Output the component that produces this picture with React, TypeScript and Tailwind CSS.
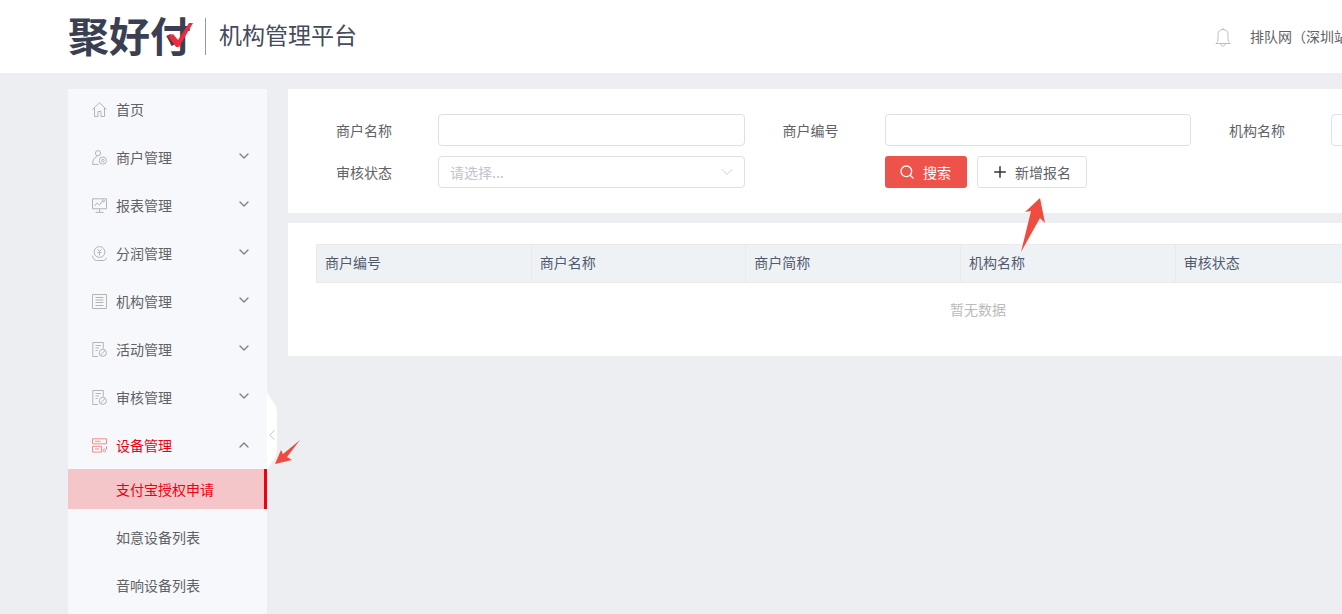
import { ChevronDown, ChevronLeft, ChevronUp, Plus, Search } from "lucide-react";
import type { ReactNode } from "react";

const font = { fontFamily: '"Noto Sans CJK SC", "Liberation Sans", sans-serif' };

const HomeIcon = () => (
  <svg viewBox="0 0 15 15" className="h-[15px] w-[15px]" fill="none" stroke="currentColor" strokeWidth="1">
    <path d="M.5 7.5L7.5.8l7 6.7M2.5 6v8.5h3.5V9.5h3v5h3.5V6" />
  </svg>
);
const Merchant = () => (
  <svg viewBox="0 0 15 15" className="h-[15px] w-[15px]" fill="none" stroke="currentColor" strokeWidth="1">
    <circle cx="6" cy="3.2" r="2.6" />
    <path d="M5 6.6C2 7.4.6 10 .6 14.4h6" />
    <circle cx="10.8" cy="10.6" r="3.6" />
    <circle cx="10.8" cy="10.6" r="1.3" />
  </svg>
);
const Report = () => (
  <svg viewBox="0 0 15 15" className="h-[15px] w-[15px]" fill="none" stroke="currentColor" strokeWidth="1">
    <path d="M.5.8h14v10H.5zM7.5 10.8v3.6M3.5 14.4h8" />
    <path d="M2.5 8l2.5-3 2.5 2 3-4" />
    <circle cx="11.5" cy="3" r="1" />
  </svg>
);
const Profit = () => (
  <svg viewBox="0 0 15 15" className="h-[15px] w-[15px]" fill="none" stroke="currentColor" strokeWidth="1">
    <circle cx="7.5" cy="6" r="5.4" />
    <path d="M5.5 3.2l2 2.3 2-2.3M7.5 5.5v4M5.5 6.5h4" />
    <path d="M.6 9.5c0 3.4 2 5 4 5h6.5c1.8 0 3-.9 3.4-2.6" />
  </svg>
);
const Org = () => (
  <svg viewBox="0 0 15 15" className="h-[15px] w-[15px]" fill="none" stroke="currentColor" strokeWidth="1">
    <path d="M.5.5h14v14H.5zM3.5 3.5h8M3.5 6h8M3.5 8.5h8M3.5 11.5h8" />
  </svg>
);
const Audit = () => (
  <svg viewBox="0 0 15 15" className="h-[15px] w-[15px]" fill="none" stroke="currentColor" strokeWidth="1">
    <path d="M6 14.5H.8V.5h10.5v6" />
    <path d="M3.5 3.5h5.5M3.5 6h3.5M3.5 8.5h2" />
    <circle cx="10.8" cy="10.8" r="3.6" />
    <path d="M8.3 13.3l5-5" />
  </svg>
);
const Device = () => (
  <svg viewBox="0 0 15 15" className="h-[15px] w-[15px]" fill="none" stroke="currentColor" strokeWidth="1">
    <path d="M.5.8h14v5H.5zM.5 8.3h9v5.800H.5zM14.500 8.300v3" />
    <path d="M3 3.300h5.500M3 11h4" />
    <circle cx="12.300" cy="12.400" r="1.400" />
  </svg>
);
const BellIcon = () => (
  <svg viewBox="0 0 16 20" className="h-[20px] w-[16px] text-[#bdbdbd]" fill="none" stroke="currentColor" strokeWidth="1">
    <path d="M1 16.500h14c-1.500-1.500-2-2.500-2-5V7.500C13 4.500 11 2.500 8 2.500S3 4.500 3 7.500v4c0 2.500-.5 3.500-2 5Z" />
    <path d="M8 2.500V.8M5.800 16.800c0 3 4.400 3 4.400 0" />
  </svg>
);

type NavItem = { label: string; icon: ReactNode; arrow?: boolean; open?: boolean };

const navItems: NavItem[] = [
  { label: "首页", icon: <HomeIcon /> },
  { label: "商户管理", icon: <Merchant />, arrow: true },
  { label: "报表管理", icon: <Report />, arrow: true },
  { label: "分润管理", icon: <Profit />, arrow: true },
  { label: "机构管理", icon: <Org />, arrow: true },
  { label: "活动管理", icon: <Audit />, arrow: true },
  { label: "审核管理", icon: <Audit />, arrow: true },
  { label: "设备管理", icon: <Device />, arrow: true, open: true },
];

const columns = ["商户编号", "商户名称", "商户简称", "机构名称", "审核状态", ""];

const Field = ({ label, children }: { label: string; children?: ReactNode }) => (
  <div className="flex h-8 shrink-0 items-center">
    <span className="w-[102px] pr-[46px] text-right text-[14px] text-[#606266]">{label}</span>
    {children ?? <input className="h-8 w-[306.5px] rounded border border-[#dcdfe6] bg-white" />}
  </div>
);

export default function App() {
  return (
    <div style={font} className="relative h-[614px] w-[1342px] overflow-hidden bg-[#edeef2]">
      <header className="flex h-[73px] items-center bg-white pl-[68px]">
        <div className="relative mb-[5px] flex w-[124px] items-center">
          <span className="text-[41px] leading-none font-bold text-[#3b3f52]">聚好付</span>
          <svg viewBox="0 0 26 26" className="absolute top-[8px] left-[99px] h-[26px] w-[26px]">
            <path d="M1 14l5-2 5 6L22 1h4L12 25H9z" fill="#ee2b3c" />
          </svg>
        </div>
        <div className="mx-[13px] h-[37px] w-px bg-[#9a9a9a]" />
        <span className="pb-[4px] text-[23px] leading-none text-[#464a5c]">机构管理平台</span>
        <div className="ml-auto flex items-center">
          <span className="mr-[19px]"><BellIcon /></span>
          <span className="w-[92px] overflow-hidden text-[14px] whitespace-nowrap text-[#606266]">排队网（深圳站</span>
        </div>
      </header>

      <div className="flex pt-4 pl-[68px]">
        <aside className="h-[540px] w-[199px] shrink-0 bg-[#f7f8fc] pt-px">
          {navItems.map((item) => (
            <div
              key={item.label}
              className={`mb-2 flex h-10 items-center pr-[15px] pb-[2px] pl-6 text-[14px] ${item.open ? "text-[#f0000f]" : "text-[#606266]"}`}
            >
              <span className={`w-[24px] shrink-0 ${item.open ? "text-[#f58a8a]" : "text-[#b4b4b4]"}`}>{item.icon}</span>
              <span>{item.label}</span>
              {item.arrow &&
                (item.open ? (
                  <ChevronUp className="ml-auto h-4 w-4 text-[#808080]" />
                ) : (
                  <ChevronDown className="mb-[2px] ml-auto h-4 w-4 text-[#808080]" />
                ))}
            </div>
          ))}
          <div className="mt-[-5px] mb-2 flex h-10 items-center border-r-[3px] border-[#f0000f] bg-[#f4c6c9] pl-12 text-[14px] text-[#f0000f]">
            支付宝授权申请
          </div>
          <div className="mb-2 flex h-10 items-center pl-12 text-[14px] text-[#606266]">如意设备列表</div>
          <div className="flex h-10 items-center pl-12 text-[14px] text-[#606266]">音响设备列表</div>
        </aside>

        <main className="ml-[21px] w-[1354px] shrink-0">
          <section className="h-[124px] bg-white pt-[25px] pl-[48px]">
            <div className="flex gap-[38px]">
              <Field label="商户名称" />
              <Field label="商户编号" />
              <Field label="机构名称" />
            </div>
            <div className="mt-[10px] flex">
              <Field label="审核状态">
                <div className="flex h-8 w-[307px] items-center justify-between rounded border border-[#dcdfe6] bg-white pr-[7px] pl-[11px] text-[14px] text-[#c0c4cc]">
                  <span>请选择...</span>
                  <ChevronDown className="h-5 w-5" strokeWidth={1} />
                </div>
              </Field>
              <button className="ml-[140px] flex h-8 w-[82px] items-center justify-center rounded-[3px] bg-[#ee534b] pr-[2px] text-[14px] text-white">
                <Search className="mr-2 h-4 w-4" />
                搜索
              </button>
              <button className="ml-[10px] flex h-8 w-[110px] items-center justify-center rounded-[3px] border border-[#dcdfe6] bg-white pr-[2px] text-[14px] text-[#606266]">
                <Plus className="mr-[6px] h-[18px] w-[18px] text-[#333]" />
                新增报名
              </button>
            </div>
          </section>

          <section className="mt-[10px] h-[133px] bg-white pt-[21px] pl-[28px]">
            <div className="grid h-[39px] w-[1290px] grid-cols-6 border border-[#e8eaec] bg-[#eff2f5]">
              {columns.map((col, i) => (
                <div key={i} className="flex items-center border-r border-[#e8eaec] pb-[2px] pl-2 text-[14px] text-[#515a6e]">
                  {col}
                </div>
              ))}
            </div>
            <div className="w-[1324px] pt-[16px] text-center text-[14px] text-[#bbbbbb]">暂无数据</div>
          </section>
        </main>
      </div>

      {/* collapse handle */}
      <svg viewBox="0 0 10 84" className="absolute top-[390px] left-[267px] h-[84px] w-[10px]">
        <path d="M0 0C1 10 10 10 10 24V58C10 72 1 72 0 84Z" fill="#fff" />
      </svg>
      <ChevronLeft className="absolute top-[426px] left-[263px] h-[18px] w-[18px] text-[#b8bcc8]" strokeWidth={1.2} />

      {/* annotation arrows */}
      <svg viewBox="0 0 30 28" className="absolute top-[438px] left-[273px] h-[28px] w-[30px]">
        <path d="M2 26L8 12l2 4L27 2 14 19l5 3Z" fill="#ee4c3f" />
      </svg>
      <svg viewBox="0 0 26 58" className="absolute top-[196px] left-[1019px] h-[58px] w-[26px]">
        <path d="M2 56L12 15l-6 1L21 2l5 25-5-5Z" fill="#ee4c3f" />
      </svg>
    </div>
  );
}
